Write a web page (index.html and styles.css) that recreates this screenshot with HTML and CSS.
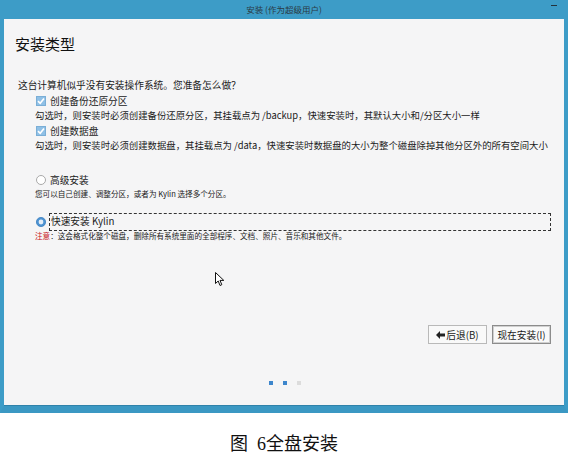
FILE: index.html
```html
<!DOCTYPE html>
<html lang="zh-CN">

<head>
    <meta charset="UTF-8">
    <title>安装类型</title>
    <link rel="stylesheet" href="styles.css">
</head>

<body>
    <div class="window">
        <div class="titlebar">
            <span class="title-text">安装 (作为超级用户)</span>
            <span class="minimize"></span>
        </div>
        <div class="content">
            <h1 class="page-title">安装类型</h1>
            <p class="question">这台计算机似乎没有安装操作系统。您准备怎么做？</p>

            <div class="check-row">
                <svg class="check" width="10" height="10" viewBox="0 0 10 10">
                    <rect x="0.5" y="0.5" width="9" height="9" fill="#8fc0e6" stroke="#7aaed6"/>
                    <path d="M2 5.2 L4.2 7.3 L8 2.6" fill="none" stroke="#fff" stroke-width="1.6"/>
                </svg>
                <span>创建备份还原分区</span>
            </div>
            <p class="desc">勾选时，则安装时必须创建备份还原分区，其挂载点为 /backup，快速安装时，其默认大小和/分区大小一样</p>

            <div class="check-row">
                <svg class="check" width="10" height="10" viewBox="0 0 10 10">
                    <rect x="0.5" y="0.5" width="9" height="9" fill="#8fc0e6" stroke="#7aaed6"/>
                    <path d="M2 5.2 L4.2 7.3 L8 2.6" fill="none" stroke="#fff" stroke-width="1.6"/>
                </svg>
                <span>创建数据盘</span>
            </div>
            <p class="desc">勾选时，则安装时必须创建数据盘，其挂载点为 /data，快速安装时数据盘的大小为整个磁盘除掉其他分区外的所有空间大小</p>

            <div class="radio-row first">
                <svg class="radio" width="10" height="10" viewBox="0 0 10 10">
                    <circle cx="5" cy="5" r="4.5" fill="#fff" stroke="#a8a8a8"/>
                </svg>
                <span>高级安装</span>
            </div>
            <p class="small">您可以自己创建、调整分区，或者为 Kylin 选择多个分区。</p>

            <div class="radio-row selected">
                <svg class="radio" width="10" height="10" viewBox="0 0 10 10">
                    <circle cx="5" cy="5" r="4.6" fill="#4d93d2" stroke="#3b7fbf" stroke-width="0.8"/>
                    <circle cx="5" cy="5" r="2.4" fill="#e4eef8"/>
                </svg>
                <span class="focus-box">快速安装 Kylin</span>
            </div>
            <p class="small warn"><span class="red">注意</span>：这会格式化整个磁盘，删除所有系统里面的全部程序、文档、照片、音乐和其他文件。</p>

            <div class="buttons">
                <button class="btn">
                    <svg width="9" height="8" viewBox="0 0 9 8">
                        <path d="M0 4 L4 0 L4 2.5 L9 2.5 L9 5.5 L4 5.5 L4 8 Z" fill="#222"/>
                    </svg>后退(B)</button>
                <button class="btn default">现在安装(I)</button>
            </div>

            <div class="dots">
                <span class="dot on"></span>
                <span class="dot on"></span>
                <span class="dot"></span>
            </div>

            <svg class="cursor" width="10" height="15" viewBox="0 0 10 15">
                <path d="M0.5 0.5 L0.5 11.5 L3.2 9 L5 13.5 L6.8 12.7 L5 8.4 L8.8 8.4 Z" fill="#fff" stroke="#111" stroke-width="1"/>
            </svg>
        </div>
    </div>

    <p class="caption">图&nbsp;&nbsp;6全盘安装</p>
</body>

</html>
```

FILE: styles.css
```css
* {
    margin: 0;
    padding: 0;
}

body {
    background: #fff;
    font-family: "Noto Sans CJK SC", "Liberation Sans", sans-serif;
    color: #1a1a1a;
}

.window {
    width: 560px;
    border-left: 4px solid #3d9cc7;
    border-right: 4px solid #3d9cc7;
    border-bottom: 7px solid #3b98c3;
    background: #3d9cc7;
}

.titlebar {
    height: 19px;
    position: relative;
    text-align: center;
    font-size: 8.5px;
    line-height: 19px;
    color: #2b3a44;
}

.minimize {
    position: absolute;
    right: 7px;
    top: 5px;
    width: 6px;
    height: 1px;
    background: #22323c;
}

.content {
    position: relative;
    height: 371px;
    background: #f5f5f6;
    border-bottom: 1px solid #2f82aa;
    padding: 15px 13px 0 14px;
    font-size: 9.7px;
}

.page-title {
    margin-left: -3px;
    font-size: 15px;
    font-weight: normal;
    line-height: 20px;
    color: #111;
}

.question {
    margin-top: 24px;
    line-height: 14px;
}

.check-row,
.radio-row {
    display: flex;
    align-items: center;
    margin-left: 18px;
    line-height: 14px;
    height: 14px;
}

.check-row {
    margin-top: 2px;
}

.check,
.radio {
    flex: none;
    margin-right: 4px;
}

.desc {
    margin-left: 17px;
    font-size: 9.4px;
    line-height: 14px;
    white-space: nowrap;
}

.radio-row.first {
    margin-top: 21px;
}

.radio-row.selected {
    margin-top: 13px;
    height: 16px;
}

.focus-box {
    flex: 1;
    margin-left: -1px;
    height: 16px;
    line-height: 14px;
    border: 1px dashed #333;
    padding-left: 1px;
}

.small {
    margin-left: 17px;
    font-size: 7.6px;
    line-height: 14px;
}

.warn {
    line-height: 12px;
}

.red {
    color: #c8161d;
}

.buttons {
    display: flex;
    justify-content: flex-end;
    gap: 5px;
    margin-top: 83px;
}

.btn {
    display: flex;
    align-items: center;
    justify-content: center;
    gap: 1px;
    width: 59px;
    height: 19px;
    background: #f9f9f9;
    border: 1px solid #b9b9b9;
    font-family: "Noto Sans CJK SC", "Liberation Sans", sans-serif;
    font-size: 9.7px;
    color: #1a1a1a;
}

.btn.default {
    border: 1px solid #8c8c8c;
    box-shadow: inset 0 0 0 1px #d0d0d0;
}

.dots {
    display: flex;
    justify-content: center;
    gap: 10px;
    margin-top: 37px;
    padding-left: 1px;
}

.dot {
    width: 4px;
    height: 4px;
    background: #dcdcdc;
}

.dot.on {
    background: #3d86cc;
}

.cursor {
    position: absolute;
    left: 211px;
    top: 253px;
}

.caption {
    padding-top: 21px;
    text-align: center;
    font-family: "Liberation Serif", "Noto Sans CJK SC", serif;
    font-size: 18px;
    line-height: 20px;
    color: #111;
}
```
